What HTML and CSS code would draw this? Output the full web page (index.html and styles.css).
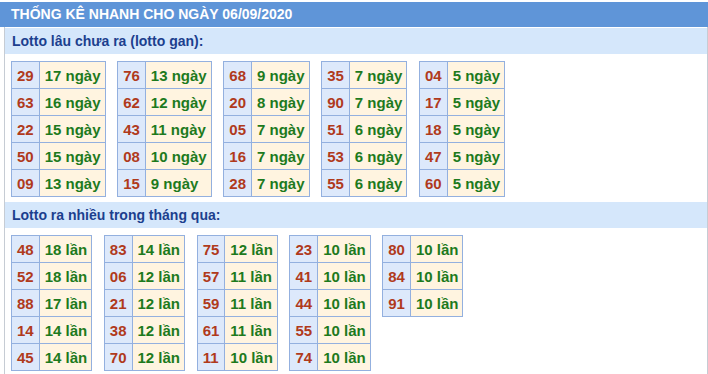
FILE: index.html
```html
<!DOCTYPE html>
<html lang="vi">
<head>
<meta charset="utf-8">
<title>Thống kê nhanh</title>
<link rel="stylesheet" href="styles.css">
</head>
<body>
<div class="page">
  <div class="title">THỐNG KÊ NHANH CHO NGÀY 06/09/2020</div>
  <div class="box">
    <div class="sub">Lotto lâu chưa ra (lotto gan):</div>
    <div class="tables">
      <table class="t"><tr><td class="n">29</td><td class="v">17 ngày</td></tr><tr><td class="n">63</td><td class="v">16 ngày</td></tr><tr><td class="n">22</td><td class="v">15 ngày</td></tr><tr><td class="n">50</td><td class="v">15 ngày</td></tr><tr><td class="n">09</td><td class="v">13 ngày</td></tr></table>
      <table class="t"><tr><td class="n">76</td><td class="v">13 ngày</td></tr><tr><td class="n">62</td><td class="v">12 ngày</td></tr><tr><td class="n">43</td><td class="v">11 ngày</td></tr><tr><td class="n">08</td><td class="v">10 ngày</td></tr><tr><td class="n">15</td><td class="v">9 ngày</td></tr></table>
      <table class="t"><tr><td class="n">68</td><td class="v">9 ngày</td></tr><tr><td class="n">20</td><td class="v">8 ngày</td></tr><tr><td class="n">05</td><td class="v">7 ngày</td></tr><tr><td class="n">16</td><td class="v">7 ngày</td></tr><tr><td class="n">28</td><td class="v">7 ngày</td></tr></table>
      <table class="t"><tr><td class="n">35</td><td class="v">7 ngày</td></tr><tr><td class="n">90</td><td class="v">7 ngày</td></tr><tr><td class="n">51</td><td class="v">6 ngày</td></tr><tr><td class="n">53</td><td class="v">6 ngày</td></tr><tr><td class="n">55</td><td class="v">6 ngày</td></tr></table>
      <table class="t"><tr><td class="n">04</td><td class="v">5 ngày</td></tr><tr><td class="n">17</td><td class="v">5 ngày</td></tr><tr><td class="n">18</td><td class="v">5 ngày</td></tr><tr><td class="n">47</td><td class="v">5 ngày</td></tr><tr><td class="n">60</td><td class="v">5 ngày</td></tr></table>
    </div>
    <div class="sub">Lotto ra nhiều trong tháng qua:</div>
    <div class="tables">
      <table class="t"><tr><td class="n">48</td><td class="v">18 lần</td></tr><tr><td class="n">52</td><td class="v">18 lần</td></tr><tr><td class="n">88</td><td class="v">17 lần</td></tr><tr><td class="n">14</td><td class="v">14 lần</td></tr><tr><td class="n">45</td><td class="v">14 lần</td></tr></table>
      <table class="t"><tr><td class="n">83</td><td class="v">14 lần</td></tr><tr><td class="n">06</td><td class="v">12 lần</td></tr><tr><td class="n">21</td><td class="v">12 lần</td></tr><tr><td class="n">38</td><td class="v">12 lần</td></tr><tr><td class="n">70</td><td class="v">12 lần</td></tr></table>
      <table class="t"><tr><td class="n">75</td><td class="v">12 lần</td></tr><tr><td class="n">57</td><td class="v">11 lần</td></tr><tr><td class="n">59</td><td class="v">11 lần</td></tr><tr><td class="n">61</td><td class="v">11 lần</td></tr><tr><td class="n">11</td><td class="v">10 lần</td></tr></table>
      <table class="t"><tr><td class="n">23</td><td class="v">10 lần</td></tr><tr><td class="n">41</td><td class="v">10 lần</td></tr><tr><td class="n">44</td><td class="v">10 lần</td></tr><tr><td class="n">55</td><td class="v">10 lần</td></tr><tr><td class="n">74</td><td class="v">10 lần</td></tr></table>
      <table class="t"><tr><td class="n">80</td><td class="v">10 lần</td></tr><tr><td class="n">84</td><td class="v">10 lần</td></tr><tr><td class="n">91</td><td class="v">10 lần</td></tr></table>
    </div>
  </div>
</div>
</body>
</html>
```
FILE: styles.css
```css
html, body {
  margin: 0;
  padding: 0;
  background: #ffffff;
}
body {
  font-family: "Liberation Sans", Arial, sans-serif;
}
.page {
  padding-top: 2px;
  width: 708px;
}
.title {
  height: 25px;
  line-height: 25px;
  background: #5f95d8;
  color: #ffffff;
  font-weight: bold;
  font-size: 14px;
  padding-left: 11px;
}
.box {
  margin-left: 4px;
  border-left: 1px solid #c6ccd4;
  border-right: 1px solid #c6ccd4;
  width: 702px;
  padding-top: 1px;
}
.sub {
  height: 26px;
  line-height: 26px;
  background: #d5e7fb;
  color: #1c3f8e;
  font-weight: bold;
  font-size: 14px;
  padding-left: 7px;
}
.tables {
  display: flex;
  align-items: flex-start;
  gap: 11.6px;
  padding: 7px 6px 5px;
}
.t {
  border-collapse: collapse;
  font-size: 15px;
  font-weight: bold;
}
.t td {
  border: 1px solid #93b0df;
  height: 26px;
  white-space: nowrap;
}
.t .n {
  padding: 0 5px;
  background: #dde9fb;
  color: #b03a1c;
}
.t .v {
  padding: 0 4px 0 5px;
  background: #fff4e0;
  color: #1d7a1d;
}
```
